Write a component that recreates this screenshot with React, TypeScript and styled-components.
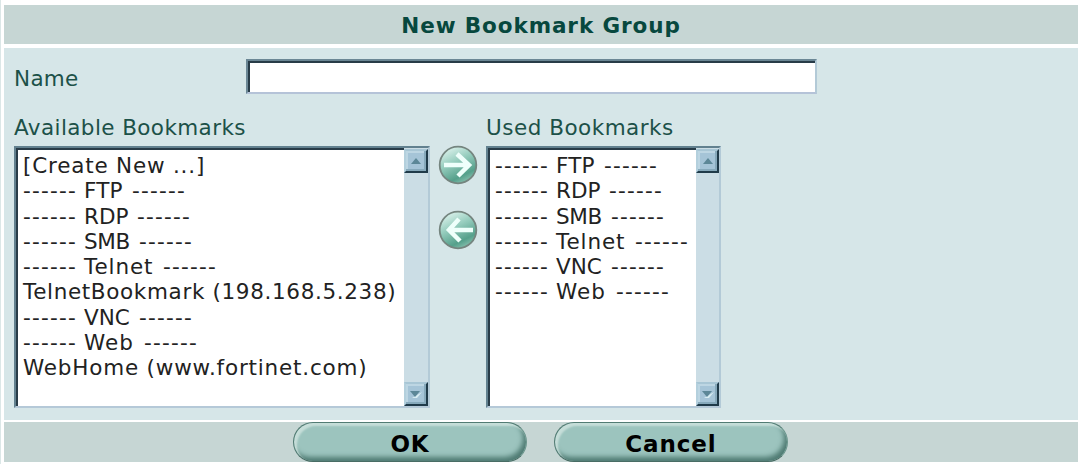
import React, { FC } from 'react';
import styled, { createGlobalStyle } from 'styled-components';

const GlobalStyle = createGlobalStyle`
  * {
    box-sizing: border-box;
  }
  body {
    margin: 0;
    background: #fff;
    font-family: "DejaVu Sans", Verdana, sans-serif;
  }
`

const Page = styled.div`
  width: 1084px;
  height: 464px;
  padding: 5px 6px 2px 3px;
  border-left: 1px solid #dbe7e7;
  overflow: hidden;
`

const Title = styled.div`
  display: flex;
  justify-content: center;
  align-items: center;
  height: 39px;
  padding-top: 3px;
  margin-bottom: 4px;
  background: #c6d6d4;
  color: #07483e;
  font-size: 21.5px;
  font-weight: bold;
  letter-spacing: 0.9px;
  line-height: 24px;
  white-space: nowrap;
`

const Form = styled.div`
  height: 372px;
  padding: 11px 10px 0;
  margin-bottom: 2px;
  background: #d6e6e8;
`

const NameRow = styled.div`
  display: flex;
  align-items: center;
  height: 35px;
`

const NameLabel = styled.div`
  width: 232px;
  padding-top: 3px;
`

const NameInput = styled.input`
  width: 571px;
  height: 35px;
  border: 2px solid;
  border-color: #6b8795 #b3cad7 #b5c3d8 #6b8795;
  box-shadow: inset 2px 2px 0 #283c48;
  border-radius: 0;
  background: #fff;
  outline: none;
`

interface ITextProps {
  tracking?: number;
}
const Text = styled.span<ITextProps>`
  color: #1c5148;
  font-size: 21.5px;
  letter-spacing: ${(props) => props.tracking || 0}px;
  line-height: 25px;
  white-space: nowrap;
`

const Columns = styled.div`
  display: flex;
  padding-top: 21px;
`

const Column = styled.div<{ width: number }>`
  display: flex;
  flex-direction: column;
  width: ${(props) => props.width}px;
`

const ListBox = styled.div`
  display: flex;
  justify-content: space-between;
  height: 262px;
  margin-top: 6px;
  border: 2px solid;
  border-color: #62818f #b3cad7 #b5c9d8 #62818f;
  box-shadow: inset 2px 2px 0 #283c48;
  background: #fff;
`

const Options = styled.div`
  padding: 5px 0 0 7px;
`

const Option = styled.div<ITextProps>`
  display: flex;
  height: 25.25px;
  color: #222;
  font-size: 21.5px;
  letter-spacing: ${(props) => props.tracking || 0}px;
  line-height: 25px;
  white-space: nowrap;
`

const Dashes = styled.span`
  width: 61px;
  letter-spacing: 1.25px;
`

const GroupName = styled.span<{ width: number } & ITextProps>`
  width: ${(props) => props.width}px;
  letter-spacing: ${(props) => props.tracking || 0}px;
`

const ScrollBar = styled.div`
  display: flex;
  flex-direction: column;
  justify-content: space-between;
  width: 24px;
  padding-top: 1px;
  background: #cbdde5;
`

const ScrollButton = styled.div`
  display: flex;
  justify-content: center;
  align-items: center;
  height: 24px;
  border: 2px solid;
  border-color: #a8c6d5 #203b4a #203b4a #b4d0dd;
  box-shadow: inset -2px -2px 0 #86a9bb, inset 2px 2px 0 #bdd6e3;
  background: #a5c4d7;
`

const Transfer = styled.div`
  display: flex;
  flex-direction: column;
  align-items: center;
  gap: 25px;
  width: 56px;
  padding-top: 30px;
`

const Round = styled.svg`
  display: block;
  width: 40px;
  height: 40px;
`

const Footer = styled.div`
  display: flex;
  gap: 27px;
  height: 40px;
  padding-left: 289px;
  background: #c6d6d4;
`

const Button = styled.button`
  width: 234px;
  height: 40px;
  padding: 4px 0 0;
  border: 1px solid;
  border-color: #527b73 #6b958c #496d65 #527b73;
  border-radius: 20px;
  background: #9cc4be;
  box-shadow: inset 3px 3px 2px #c6ded9, inset -3px -4px 5px #4f7b73;
  color: #000;
  font: bold 23px/30px "DejaVu Sans", Verdana, sans-serif;
  letter-spacing: 0.9px;
`

const Arrow: FC<{ back?: boolean }> = ({ back }) => {
  const id = back ? 'shadeBack' : 'shadeForward'
  return (
    <Round viewBox="0 0 40 40">
      <defs>
        <linearGradient id={id} x1="0.2" y1="0" x2="0.7" y2="1">
          <stop offset="0" stopColor="#e2f5f0" />
          <stop offset="0.4" stopColor="#98cebf" />
          <stop offset="0.8" stopColor="#55a08b" />
          <stop offset="1" stopColor="#8cc3b2" />
        </linearGradient>
      </defs>
      <circle cx="20" cy="20" r="18.3" fill={`url(#${id})`} stroke="#75857f" strokeWidth="1.8" />
      <path
        d={back ? 'M35 20H12M21 9L11 20L22 31' : 'M6 20H29M19 9L31 20L20 31'}
        fill="none"
        stroke="#effffb"
        strokeWidth="4.5"
      />
    </Round>
  )
}

const Scroll: FC = () => (
  <ScrollBar>
    <ScrollButton>
      <svg width="10" height="6" viewBox="0 0 10 6"><path d="M0 6L5 0L10 6Z" fill="#5c8797" /></svg>
    </ScrollButton>
    <ScrollButton>
      <svg width="12" height="7" viewBox="0 0 12 7">
        <path d="M2 7H7L12 1Z" fill="#d8edf2" />
        <path d="M0 0H10L5 6Z" fill="#5c8797" />
      </svg>
    </ScrollButton>
  </ScrollBar>
)

interface IItem {
  text: string;
  // room taken by a group name between its dashes
  width?: number;
  tracking?: number;
}

const ftp = { text: 'FTP', width: 48, tracking: 0.2 }
const rdp = { text: 'RDP', width: 53, tracking: 0 }
const smb = { text: 'SMB', width: 55, tracking: -0.3 }
const telnet = { text: 'Telnet', width: 79, tracking: 0.9 }
const vnc = { text: 'VNC', width: 55, tracking: 0 }
const web = { text: 'Web', width: 60, tracking: 1 }

const available: IItem[] = [
  { text: '[Create New ...]', tracking: 0.8 },
  ftp, rdp, smb, telnet,
  { text: 'TelnetBookmark (198.168.5.238)', tracking: 0.65 },
  vnc, web,
  { text: 'WebHome (www.fortinet.com)', tracking: 0.8 },
]
const used: IItem[] = [ftp, rdp, smb, telnet, vnc, web]

const Bookmarks: FC<{ items: IItem[] }> = ({ items }) => (
  <ListBox>
    <Options>
      {items.map((item) => (
        <Option key={item.text} tracking={item.tracking}>
          {item.width
            ? <>
              <Dashes>------</Dashes>
              <GroupName width={item.width} tracking={item.tracking}>{item.text}</GroupName>
              <Dashes>------</Dashes>
            </>
            : item.text}
        </Option>
      ))}
    </Options>
    <Scroll />
  </ListBox>
)

const App: FC = () => (
  <>
    <GlobalStyle />
    <Page>
      <Title>New Bookmark Group</Title>
      <Form>
        <NameRow>
          <NameLabel><Text tracking={0.3}>Name</Text></NameLabel>
          <NameInput />
        </NameRow>
        <Columns>
          <Column width={416}>
            <Text tracking={0.4}>Available Bookmarks</Text>
            <Bookmarks items={available} />
          </Column>
          <Transfer>
            <Arrow />
            <Arrow back />
          </Transfer>
          <Column width={235}>
            <Text tracking={0.5}>Used Bookmarks</Text>
            <Bookmarks items={used} />
          </Column>
        </Columns>
      </Form>
      <Footer>
        <Button>OK</Button>
        <Button>Cancel</Button>
      </Footer>
    </Page>
  </>
)

export default App;
